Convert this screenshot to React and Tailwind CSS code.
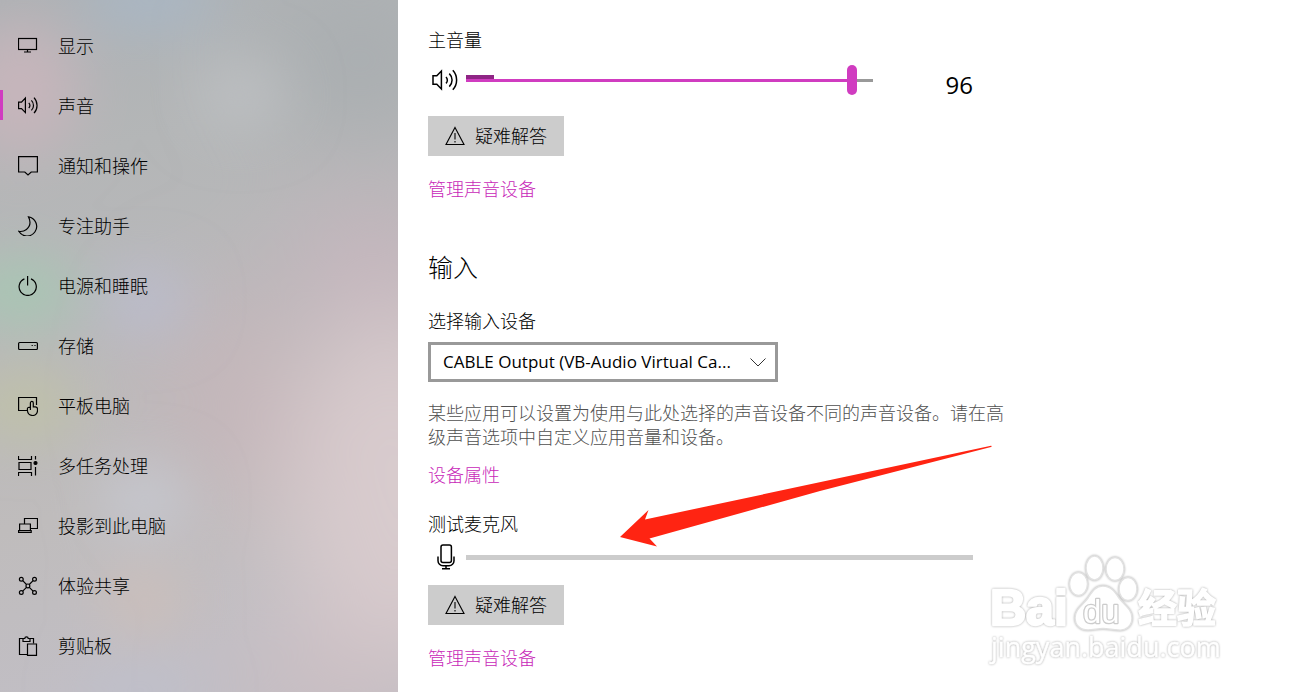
import { useState } from "react";

// ======================================================
// Icons
// ======================================================
function Icon({ children, className = "w-5 h-5", viewBox = "0 0 20 20", width = 1.2 }) {
  return (
    <svg
      className={`${className} shrink-0`}
      viewBox={viewBox}
      fill="none"
      stroke="currentColor"
      strokeWidth={width}
      aria-hidden="true"
    >
      {children}
    </svg>
  );
}

const DisplayIcon = () => (
  <Icon>
    <rect x="0.5" y="2.5" width="18" height="11" />
    <path d="M9.5 13.5v3M6 16h7" />
  </Icon>
);

const SoundIcon = () => (
  <Icon>
    <path d="M0.6 6.2h2.9L7.4 2v14.6L3.5 12.7H0.6zM10.8 6.8a4 4 0 0 1 0 5.2M13.4 4.4a7 7 0 0 1 0 10M16 1.6a11.5 11.5 0 0 1 0 15.6" />
  </Icon>
);

const NotificationIcon = () => (
  <Icon>
    <path d="M0.6 0.6h18.8v15.4h-6.2l-3.2 3-3.2-3H0.6z" />
  </Icon>
);

const MoonIcon = () => (
  <Icon>
    <path d="M10.5 0.9A9.6 9.6 0 1 1 0.8 15.3C6.2 16.4 12 12.2 12 6.6c0-2-.6-4-1.5-5.7z" />
  </Icon>
);

const PowerIcon = () => (
  <Icon>
    <path d="M6.4 2.9a8.6 8.6 0 1 0 6.6 0M9.6 0v9.6" />
  </Icon>
);

const StorageIcon = () => (
  <Icon>
    <rect x="0.6" y="6.5" width="18.8" height="7" rx="1" />
    <path d="M13.6 9.5h1.2M16.4 9.5h1.2" />
  </Icon>
);

const TabletIcon = () => (
  <Icon>
    <path d="M9 14.5H0.6v-13h17.9V9" />
    <path d="M12.4 14V6.9a1.4 1.4 0 0 1 2.9 0v4h2a2.2 2.2 0 0 1 2.2 2.2v1.6a4.8 4.8 0 0 1-4.8 4.8c-3 0-5.2-2.2-5.3-5.2v-1.6c0-1.2 1.2-1.7 3-1.2" />
  </Icon>
);

const MultitaskIcon = () => (
  <Icon>
    <path d="M0.5 0v3.5h13V0M0.5 20v-3.5h13V20M1 6.5h12v7H1zM17.5 0v3.5M17.5 11v8.5" />
    <circle cx="17.5" cy="7" r="1.5" fill="currentColor" />
  </Icon>
);

const ProjectIcon = () => (
  <Icon>
    <path d="M6.5 7.5v-5h13v10h-6.5M1.6 14.5V8h10.8v6.5M0.6 14.6h12.6v1.9H0.6z" />
  </Icon>
);

const ShareIcon = () => (
  <Icon>
    <circle cx="3.3" cy="3.3" r="1.9" />
    <circle cx="16.5" cy="3.3" r="1.9" />
    <circle cx="3.3" cy="16.5" r="1.9" />
    <circle cx="16.5" cy="16.5" r="1.9" />
    <circle cx="9.9" cy="9.9" r="1.9" />
    <path d="M4.7 4.7l3.8 3.8M15.1 4.7l-3.8 3.8M4.7 15.1l3.8-3.8M15.1 15.1l-3.8-3.8" />
  </Icon>
);

const ClipboardIcon = () => (
  <Icon>
    <path d="M9 18.5H1.5v-16h3.8M11.7 2.5h3.8V7.5M5 5.5v-3h1.8a1.7 1.7 0 0 1 3.4 0H12v3z" />
    <path d="M9.5 8h9v11.4h-9z" />
  </Icon>
);

const WarningIcon = () => (
  <Icon width={1.1}>
    <path d="M10 1.4L19 18.5H1zM10 7v6.5M10 15v1.4" />
  </Icon>
);

const VolumeIcon = () => (
  <Icon className="w-[26px] h-[22px]" viewBox="0 0 26 22" width={1.5}>
    <path d="M1 6.8h3.8L9.4 2v18L4.8 15.2H1zM14 8a4.5 4.5 0 0 1 0 6.4M17.3 4.6a9 9 0 0 1 0 13M20.8 1.2a14.5 14.5 0 0 1 0 19.6" />
  </Icon>
);

const MicIcon = () => (
  <Icon className="w-[18px] h-[26px]" viewBox="0 0 18 26" width={1.5}>
    <rect x="4" y="1" width="10.4" height="17.4" rx="2" />
    <path d="M1 12.5v4.2a5 5 0 0 0 5 5h6a5 5 0 0 0 5-5v-4.2M9 21.7v3M5 24.7h8" />
  </Icon>
);

// ======================================================
// Sidebar
// ======================================================
const navItems = [
  { label: "显示", icon: DisplayIcon },
  { label: "声音", icon: SoundIcon, active: true },
  { label: "通知和操作", icon: NotificationIcon },
  { label: "专注助手", icon: MoonIcon },
  { label: "电源和睡眠", icon: PowerIcon },
  { label: "存储", icon: StorageIcon },
  { label: "平板电脑", icon: TabletIcon },
  { label: "多任务处理", icon: MultitaskIcon },
  { label: "投影到此电脑", icon: ProjectIcon },
  { label: "体验共享", icon: ShareIcon },
  { label: "剪贴板", icon: ClipboardIcon },
];

// Blurred wallpaper showing through the sidebar
function Wallpaper() {
  return (
    <svg
      className="absolute inset-0 w-full h-full"
      viewBox="0 0 398 692"
      preserveAspectRatio="none"
      aria-hidden="true"
    >
      <defs>
        <filter id="soften" x="-100%" y="-100%" width="300%" height="300%">
          <feGaussianBlur stdDeviation="28" />
        </filter>
        <filter id="soften-wide" x="-100%" y="-100%" width="300%" height="300%">
          <feGaussianBlur stdDeviation="50" />
        </filter>
        <linearGradient id="base" x1="0" y1="0" x2="0.15" y2="1">
          <stop offset="0" stopColor="#adb1b4" />
          <stop offset="0.25" stopColor="#b4b6b7" />
          <stop offset="0.5" stopColor="#b9b8ba" />
          <stop offset="0.75" stopColor="#bfbcbc" />
          <stop offset="1" stopColor="#c1bec4" />
        </linearGradient>
      </defs>
      <rect width="398" height="692" fill="url(#base)" />
      <g filter="url(#soften-wide)">
        <ellipse cx="400" cy="490" rx="120" ry="180" fill="#d8cbcd" />
        <ellipse cx="370" cy="260" rx="80" ry="60" fill="#c6b5bd" />
        <ellipse cx="230" cy="400" rx="70" ry="110" fill="#c4b6ba" />
        <ellipse cx="330" cy="680" rx="90" ry="50" fill="#cbbec2" />
        <ellipse cx="360" cy="60" rx="100" ry="70" fill="#a9adb0" />
      </g>
      <g filter="url(#soften)">
        <ellipse cx="20" cy="90" rx="60" ry="70" fill="#c6b5bb" />
        <ellipse cx="150" cy="0" rx="70" ry="25" fill="#a8b8c8" />
        <ellipse cx="240" cy="95" rx="45" ry="35" fill="#bdc0c2" />
        <ellipse cx="20" cy="292" rx="60" ry="30" fill="#a5c9b2" />
        <ellipse cx="145" cy="300" rx="40" ry="30" fill="#bbbdd0" />
        <ellipse cx="25" cy="405" rx="55" ry="32" fill="#c0c2a6" />
        <ellipse cx="145" cy="500" rx="45" ry="35" fill="#c6c8d0" />
        <ellipse cx="145" cy="600" rx="40" ry="30" fill="#cebfb9" />
        <ellipse cx="140" cy="692" rx="60" ry="20" fill="#bec0ce" />
      </g>
    </svg>
  );
}

function Sidebar() {
  return (
    <nav className="relative overflow-hidden w-[31%] max-w-[398px] shrink-0 pt-4">
      <Wallpaper />
      {navItems.map(({ label, icon: NavIcon, active }) => (
        <a
          key={label}
          href="#"
          aria-current={active ? "page" : undefined}
          className="relative flex items-center gap-5 h-[60px] px-[18px]"
        >
          {active && <span className="absolute left-0 top-[14px] w-[3px] h-[30px] bg-[#d03cc0]" />}
          <NavIcon />
          <span>{label}</span>
        </a>
      ))}
    </nav>
  );
}

// ======================================================
// Controls
// ======================================================
function TroubleshootButton() {
  return (
    <button type="button" className="flex items-center gap-[10px] h-10 px-[17px] bg-[#cccccc]">
      <WarningIcon />
      <span>疑难解答</span>
    </button>
  );
}

function VolumeSlider({ value, onChange }) {
  return (
    <div className="relative flex-1 h-[30px]">
      <span className="absolute left-0 top-[10px] w-7 h-1 bg-[#8f2585]" />
      <input
        id="volume"
        type="range"
        min="0"
        max="100"
        value={value}
        onChange={(e) => onChange(Number(e.target.value))}
        className="relative block w-full h-[30px] appearance-none bg-transparent bg-no-repeat bg-[length:100%_3px] bg-[position:0_14px] [&::-webkit-slider-thumb]:appearance-none [&::-webkit-slider-thumb]:w-[10px] [&::-webkit-slider-thumb]:h-[30px] [&::-webkit-slider-thumb]:rounded-full [&::-webkit-slider-thumb]:bg-[#d03cc0]"
        style={{ backgroundImage: `linear-gradient(to right, #d03cc0 ${value}%, #999999 ${value}%)` }}
      />
    </div>
  );
}

// ======================================================
// Overlays
// ======================================================
function Arrow() {
  return (
    <svg
      className="absolute left-[222px] top-[445px] w-[373px] h-[102px] pointer-events-none"
      viewBox="0 0 373 102"
      aria-hidden="true"
    >
      <path d="M0 92L28.5 65 25 74.5 371 0.8q1.5 0 0 1.2L200 46 29.5 93.5 37 101.5z" fill="#ff2412" />
    </svg>
  );
}

function Watermark() {
  return (
    <svg
      className="absolute right-[67px] bottom-[22px] w-[240px] h-[120px] pointer-events-none drop-shadow-[0_0_1px_#aaaaaa]"
      viewBox="0 0 240 120"
      fill="#ffffff"
      stroke="#ffffff"
      strokeWidth="1.5"
      strokeLinejoin="round"
    >
      <g className="font-['Liberation_Sans','Noto_Sans_CJK_SC',sans-serif] font-bold">
        <text x="5" y="75" fontSize="50" strokeWidth="2.5">Bai</text>
        <text x="153" y="72" fontSize="39">经验</text>
      </g>
      <g stroke="#e2e2e2">
        <ellipse cx="93.5" cy="34" rx="9" ry="11.5" />
        <ellipse cx="109.5" cy="18" rx="8.5" ry="12" />
        <ellipse cx="130" cy="19" rx="9" ry="11.5" />
        <ellipse cx="143" cy="39" rx="9" ry="11.5" />
        <path d="M118 36c8 0 12 6 16 12 5 7 13 11 13 20 0 8-6 13-14 12-5 0-10-1.5-15-1.5S108 80 103 80c-8 0-13-5-13-12 0-9 8-13 13-20 4-6 7-12 15-12z" />
      </g>
      <text
        x="98"
        y="73"
        fontSize="33"
        stroke="#cccccc"
        strokeWidth="2.5"
        className="font-['Liberation_Sans',sans-serif] font-normal [paint-order:stroke]"
      >
        du
      </text>
      <text x="6" y="107" fontSize="27" strokeWidth="0.5" className="font-['Open_Sans',sans-serif] font-normal">
        jingyan.baidu.com
      </text>
    </svg>
  );
}

// ======================================================
// Sound settings page
// ======================================================
export default function App() {
  const [volume, setVolume] = useState(96);

  return (
    <div className="relative flex min-h-screen bg-white text-black text-[18px] leading-6 font-light font-['Open_Sans','Noto_Sans_CJK_SC',sans-serif]">
      <Sidebar />

      <main className="relative flex-1 min-w-0 pt-7 pl-[30px] pb-5">
        {/* Output volume */}
        <section className="max-w-[545px]">
          <label htmlFor="volume" className="block">主音量</label>
          <div className="flex items-start mt-[13px]">
            <span className="flex items-center w-[38px] h-[30px] pl-1">
              <VolumeIcon />
            </span>
            <VolumeSlider value={volume} onChange={setVolume} />
            <output htmlFor="volume" className="w-[100px] text-right text-2xl leading-10 font-normal">
              {volume}
            </output>
          </div>
          <div className="mt-[11px]">
            <TroubleshootButton />
          </div>
          <a href="#" className="block w-fit mt-[21px] text-[#c828b8]">管理声音设备</a>
        </section>

        {/* Input */}
        <section className="mt-[50px]">
          <h2 className="text-[25px] leading-8">输入</h2>
          <label htmlFor="input-device" className="block mt-[26px]">选择输入设备</label>
          <div className="relative max-w-[350px] mt-[9px]">
            <select
              id="input-device"
              className="block w-full h-10 pl-3 pr-10 appearance-none border-[3px] border-[#999999] bg-white text-[17px] font-normal text-ellipsis"
            >
              <option>CABLE Output (VB-Audio Virtual Ca...</option>
            </select>
            <svg
              className="absolute right-3 top-4 w-4 h-[9px] pointer-events-none"
              viewBox="0 0 16 9"
              fill="none"
              stroke="#333333"
              aria-hidden="true"
            >
              <path d="M0.5 0.5L8 8l7.5-7.5" />
            </svg>
          </div>
          <p className="max-w-[576px] mt-[19px] text-[#505050]">
            某些应用可以设置为使用与此处选择的声音设备不同的声音设备。请在高级声音选项中自定义应用音量和设备。
          </p>
          <a href="#" className="block w-fit mt-[14px] text-[#c828b8]">设备属性</a>
        </section>

        {/* Microphone test */}
        <section className="max-w-[545px] mt-[25px]">
          <h3>测试麦克风</h3>
          <div className="flex items-center mt-2">
            <span className="w-[38px] pl-[9px]">
              <MicIcon />
            </span>
            <div className="flex-1 h-[5px] bg-[#cccccc]" />
          </div>
          <div className="mt-[15px]">
            <TroubleshootButton />
          </div>
          <a href="#" className="block w-fit mt-[21px] text-[#c828b8]">管理声音设备</a>
        </section>

        <Arrow />
      </main>

      <Watermark />
    </div>
  );
}
